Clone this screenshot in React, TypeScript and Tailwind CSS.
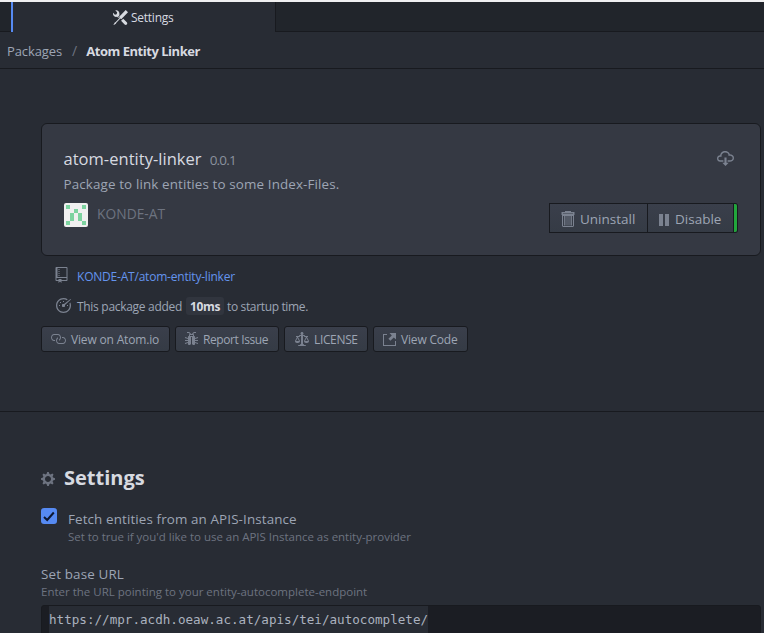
import type { ReactNode } from 'react';

function Icon({ d, w = 16, width, height, className = '' }: { d: string; w?: number; width: number; height: number; className?: string }) {
  return (
    <svg viewBox={`0 0 ${w} 16`} width={width} height={height} fill="currentColor" fillRule="evenodd" className={`shrink-0 ${className}`}>
      <path d={d} />
    </svg>
  );
}

const paths = {
  tools:
    'M4.48 7.27c.26.26 1.28 1.33 1.28 1.33l.56-.58-.88-.91 1.69-1.8s-.76-.74-.43-.45c.32-1.19.03-2.51-.87-3.44C4.93.5 3.66.2 2.52.51l1.93 2-.51 1.96-1.89.52-1.93-1.99C-.19 4.17.1 5.48 1 6.4c.94.98 2.29 1.26 3.48.87zm6.44 1.94l-2.33 2.3 3.84 3.98c.31.33.73.49 1.14.49.41 0 .82-.16 1.14-.49.63-.65.63-1.7 0-2.35l-3.79-3.93zM16 2.53L13.55 0 6.33 7.46l.88.91-4.31 4.46-.99.53-1.39 2.27.35.37 2.2-1.44.51-1.02L7.9 9.08l.88.91L16 2.53z',
  cloud:
    'M9 12h2l-3 3-3-3h2V7h2v5zm3-8c0-.44-.91-3-4.5-3C5.08 1 3 2.92 3 5 1.02 5 0 6.52 0 8c0 1.53 1 3 3 3h3V9.7H3C1.38 9.7 1.3 8.28 1.3 8c0-.17.05-1.7 1.7-1.7h1.3V5c0-1.39 1.56-2.7 3.2-2.7 2.55 0 3.13 1.55 3.2 1.8v1.2H12c.81 0 2.7.22 2.7 2.2 0 2.09-2.25 2.2-2.7 2.2h-2V11h2c2.08 0 4-1.16 4-3.5C16 5.06 14.08 4 12 4z',
  repo:
    'M4 9H3V8h1v1zm0-3H3v1h1V6zm0-2H3v1h1V4zm0-2H3v1h1V2zm8-1v12c0 .55-.45 1-1 1H6v2l-1.5-1.5L3 16v-2H1c-.55 0-1-.45-1-1V1c0-.55.45-1 1-1h10c.55 0 1 .45 1 1zm-1 10H1v2h2v-1h3v1h5v-2zm0-10H2v9h9V1z',
  dashboard:
    'M9 5H8V4h1v1zm4 3h-1v1h1V8zM6 5H5v1h1V5zM5 8H4v1h1V8zm11-5.5l-.5-.5L9 7c-.06-.02-1 0-1 0-.55 0-1 .45-1 1v1c0 .55.45 1 1 1h1c.55 0 1-.45 1-1v-.92l6-5.58zm-1.59 4.09c.19.61.3 1.25.3 1.91 0 3.42-2.78 6.2-6.2 6.2-3.42 0-6.21-2.78-6.21-6.2 0-3.42 2.78-6.2 6.2-6.2 1.2 0 2.31.34 3.27.94l.94-.94A7.459 7.459 0 0 0 8.51 1C4.36 1 1 4.36 1 8.5 1 12.64 4.36 16 8.5 16c4.14 0 7.5-3.36 7.5-7.5 0-1.03-.2-2.02-.59-2.91l-1 1z',
  link:
    'M4 9h1v1H4c-1.5 0-3-1.69-3-3.5S2.55 3 4 3h4c1.45 0 3 1.69 3 3.5 0 1.41-.91 2.72-2 3.25V8.59c.58-.45 1-1.27 1-2.09C10 5.22 8.98 4 8 4H4c-.98 0-2 1.22-2 2.5S3 9 4 9zm9-3h-1v1h1c1 0 2 1.22 2 2.5S13.98 12 13 12H9c-.98 0-2-1.22-2-2.5 0-.83.42-1.64 1-2.09V6.25c-1.09.53-2 1.84-2 3.25C6 11.31 7.55 13 9 13h4c1.45 0 3-1.69 3-3.5S14.5 6 13 6z',
  bug:
    'M11 10h3V9h-3V8l3.17-1.03-.34-.94L11 7V6c0-.55-.45-1-1-1V4c0-.48-.36-.88-.83-.97L10.2 2H12V1H9.8l-2 2h-.59L5.2 1H3v1h1.8l1.03 1.03C5.36 3.12 5 3.51 5 4v1c-.55 0-1 .45-1 1v1l-2.83-.97-.34.94L4 8v1H1v1h3v1L.83 12.03l.34.94L4 12v1c0 .55.45 1 1 1h1l1-1V6h1v7l1 1h1c.55 0 1-.45 1-1v-1l2.83.97.34-.94L11 11v-1zM9 5H6V4h3v1z',
  law:
    'M7 4c-.83 0-1.5-.67-1.5-1.5S6.17 1 7 1s1.5.67 1.5 1.5S7.83 4 7 4zm7 6c0 1.11-.89 2-2 2h-1c-1.11 0-2-.89-2-2l2-4h-1c-.55 0-1-.45-1-1H8v8c.42 0 1 .45 1 1h1c.42 0 1 .45 1 1H3c0-.55.58-1 1-1h1c0-.55.58-1 1-1h.03L6 5H5c0 .55-.45 1-1 1H3l2 4c0 1.11-.89 2-2 2H2c-1.11 0-2-.89-2-2l2-4H1V5h3c0-.55.45-1 1-1h4c.55 0 1 .45 1 1h3v1h-1l2 4zM2.5 7L1 10h3L2.5 7zM13 10l-1.5-3-1.5 3h3z',
  gear:
    'M14 8.77v-1.6l-1.94-.64-.45-1.09.88-1.84-1.13-1.13-1.81.91-1.09-.45-.69-1.92h-1.6l-.63 1.94-1.11.45-1.84-.88-1.13 1.13.91 1.81-.45 1.09L0 7.23v1.59l1.94.64.45 1.09-.88 1.84 1.13 1.13 1.81-.91 1.09.45.69 1.92h1.59l.63-1.94 1.11-.45 1.84.88 1.13-1.13-.92-1.81.47-1.09L14 8.75v.02zM7 11c-1.66 0-3-1.34-3-3s1.34-3 3-3 3 1.34 3 3-1.34 3-3 3z',
};

function Trash() {
  return (
    <svg width="14" height="16" viewBox="0 0 14 16" fill="currentColor" className="shrink-0">
      <path fillRule="evenodd" d="M4 0h6v1h3.5v3h-13V1H4V0zM2 2.2v.6h10v-.6H2z" />
      <path fillRule="evenodd" d="M1 4h12v11l-1 1H2l-1-1V4zm1 1v10h10V5H2z" />
      <path d="M3 5h1.5v9.5H3zM5.5 5h1v9.5h-1zM7.5 5h1v9.5h-1zM9.5 5H11v9.5H9.5z" opacity=".85" />
    </svg>
  );
}

function External() {
  return (
    <svg width="13" height="13" viewBox="0 0 13 13" fill="currentColor" className="shrink-0">
      <path d="M0 1h4v1H1v10h11V8h1v5H0V1z" />
      <path d="M6.5 0H13v6.5L10.8 4.4 7.4 7.8 5.4 5.8 8.8 2.4z" />
    </svg>
  );
}

const avatar = ['10001', '00100', '01010', '01010', '10001'];

function Avatar() {
  return (
    <svg width="24" height="24" viewBox="0 0 24 24" className="shrink-0 rounded-[2px]">
      <rect width="24" height="24" fill="#f0f0f0" />
      {avatar.map((row, y) =>
        [...row].map((c, x) => c === '1' && <rect key={`${x}-${y}`} x={2 + x * 4} y={2 + y * 4} width="4" height="4" fill="#7dd3a0" />),
      )}
    </svg>
  );
}

function SmallButton({ width, className = '', children }: { width: string; className?: string; children: ReactNode }) {
  return (
    <button
      className={`flex h-[26px] shrink-0 items-center rounded-[3px] border border-[#181a1f] bg-linear-to-b from-[#3a3f4b] to-[#353b45] text-[12px] leading-[20px] whitespace-nowrap text-[#9da5b4] ${width} ${className}`}
    >
      {children}
    </button>
  );
}

export default function App() {
  return (
    <div className="h-[633px] w-[764px] overflow-hidden bg-[#282c34] font-['Open_Sans','Noto_Sans',sans-serif] whitespace-nowrap text-[#9da5b4]">
      <div className="h-[2px] bg-[#f0f0f1]" />
      <div className="flex h-[30px]">
        <div className="w-[11px] border-b border-[#181a1f] bg-[#21252b]" />
        <div className="flex w-[265px] items-center border-r border-l-2 border-r-[#181a1f] border-l-[#568af2] bg-[#282c34] pt-[1px] pl-[100px] text-[12px] leading-[20px] text-[#d7dae0]">
          <Icon d={paths.tools} width={15} height={15} />
          <span className="ml-[3px] pt-[1px] tracking-[-0.25px]">Settings</span>
        </div>
        <div className="flex-1 border-b border-[#181a1f] bg-[#21252b]" />
      </div>

      <nav className="flex h-[37px] items-center border-b border-[#181a1f] pt-[2px] pl-[7px] text-[13px] leading-[20px]">
        <span className="tracking-[-0.1px]">Packages</span>
        <span className="ml-[10px] text-[14px] text-[#6d7380]">/</span>
        <span className="ml-[9px] font-bold tracking-[-0.47px] text-[#d7dae0]">Atom Entity Linker</span>
      </nav>

      <section className="h-[343px] border-b border-[#181a1f] pt-[54px] pl-[41px]">
        <div className="flex h-[133px] w-[720px] rounded-[6px] border border-[#181a1f] bg-[#353943] pl-[22px]">
          <div className="flex-1">
            <div className="mt-[25px] flex h-[20px] items-baseline leading-[20px]">
              <span className="-ml-[0.5px] text-[16.5px] tracking-[0.03px] text-[#d7dae0]">atom-entity-linker</span>
              <span className="ml-[8px] text-[13.5px] tracking-[-0.8px] text-[#8a919e]">0.0.1</span>
            </div>
            <div className="mt-[5px] -ml-[0.5px] text-[13.4px] leading-[20px] tracking-[0.13px]">Package to link entities to some Index-Files.</div>
            <div className="mt-[9px] flex h-[24px]">
              <Avatar />
              <span className="ml-[9px] text-[13.8px] leading-[22px] tracking-[0.02px] text-[#6d7380]">KONDE-AT</span>
            </div>
          </div>
          <div className="mr-[22px] flex flex-col items-end">
            <Icon d={paths.cloud} width={17} height={17} className="mt-[26px] mr-[4px] text-[#7b8290]" />
            <div className="mt-[36px] flex h-[30px] text-[13.5px] leading-[20px]">
              <button className="flex w-[99px] items-center border border-[#181a1f] bg-linear-to-b from-[#3a3f4b] to-[#353b45] pl-[11px]">
                <span className="pt-[2px] text-[#7b8290]">
                  <Trash />
                </span>
                <span className="ml-[5px] pt-[2px]">Uninstall</span>
              </button>
              <button className="flex w-[90px] items-center rounded-r-[3px] border border-l-0 border-[#181a1f] bg-linear-to-b from-[#3a3f4b] to-[#353b45] pl-[11px]">
                <span className="flex gap-[2px] pt-[3px]">
                  <i className="h-[12px] w-[4px] bg-[#7b8290]" />
                  <i className="h-[12px] w-[4px] bg-[#7b8290]" />
                </span>
                <span className="ml-[6px] pt-[2px]">Disable</span>
                <i className="ml-auto h-[28px] w-[4px] shrink-0 rounded-r-[2px] border-l border-[#181a1f] bg-[#22a63c]" />
              </button>
            </div>
          </div>
        </div>

        <div className="mt-[11px] flex h-[20px] items-start pl-[14px] text-[12px] leading-[20px]">
          <Icon d={paths.repo} w={12} width={13} height={16} className="text-[#7b8290]" />
          <a className="ml-[9px] tracking-[-0.21px] text-[#6494ed]">KONDE-AT/atom-entity-linker</a>
        </div>
        <div className="mt-[10px] flex h-[20px] items-start pl-[14px] text-[12px] leading-[20px]">
          <Icon d={paths.dashboard} width={16} height={16} className="text-[#7b8290]" />
          <span className="ml-[6px] tracking-[-0.3px]">This package added</span>
          <span className="ml-[4px] h-[18px] w-[38px] rounded-[3px] bg-[#31353e] pl-[4px] font-bold tracking-[-0.35px] text-[#d7dae0]">10ms</span>
          <span className="ml-[3px] tracking-[-0.35px]">to startup time.</span>
        </div>
        <div className="mt-[9px] flex gap-[5px]">
          <SmallButton width="w-[129px]" className="pl-[8px] tracking-[-0.17px]">
            <Icon d={paths.link} width={16} height={16} className="text-[#7b8290]" />
            <span className="ml-[5px] pt-[2px]">View on Atom.io</span>
          </SmallButton>
          <SmallButton width="w-[104px]" className="pl-[8px] tracking-[-0.4px]">
            <Icon d={paths.bug} w={15} width={15} height={16} className="text-[#7b8290]" />
            <span className="ml-[4px] pt-[2px]">Report Issue</span>
          </SmallButton>
          <SmallButton width="w-[84px]" className="pl-[10px] tracking-[-0.35px]">
            <Icon d={paths.law} w={14} width={14} height={16} className="text-[#7b8290]" />
            <span className="ml-[5px] pt-[2px]">LICENSE</span>
          </SmallButton>
          <SmallButton width="w-[95px]" className="pl-[9px] tracking-[-0.18px]">
            <span className="text-[#7b8290]">
              <External />
            </span>
            <span className="ml-[5px] pt-[2px]">View Code</span>
          </SmallButton>
        </div>
      </section>

      <section className="pt-[52px] pl-[41px]">
        <h2 className="flex h-[28px] items-center text-[20px] leading-[28px] font-bold text-[#d7dae0]">
          <Icon d={paths.gear} w={14} width={14} height={16} className="mt-[2px] text-[#6d7380]" />
          <span className="ml-[9px]">Settings</span>
        </h2>
        <div className="mt-[16px] flex">
          <span className="flex h-[16px] w-[16px] items-center justify-center rounded-[3px] bg-[#568af2]">
            <svg width="12" height="11" viewBox="0 0 12 11" fill="none" stroke="#0d1730" strokeWidth="2">
              <path d="M1 6l3.2 3L10.8 1.5" />
            </svg>
          </span>
          <div className="ml-[11px]">
            <div className="mt-[1px] text-[13.4px] leading-[20px] tracking-[0.12px]">Fetch entities from an APIS-Instance</div>
            <div className="-mt-[2px] text-[11.5px] leading-[20px] tracking-[-0.02px] text-[#6d7380]">Set to true if you&apos;d like to use an APIS Instance as entity-provider</div>
          </div>
        </div>
        <div className="mt-[17px] text-[13.4px] leading-[20px] tracking-[0.15px]">Set base URL</div>
        <div className="-mt-[2px] text-[11.5px] leading-[20px] text-[#6d7380]">Enter the URL pointing to your entity-autocomplete-endpoint</div>
        <div className="mt-[3px] h-[40px] w-[720px] rounded-[3px] border border-[#181a1f] bg-[#1b1d23] pl-[7px]">
          <span className="block h-[38px] w-[379px] bg-[#282c34] font-['DejaVu_Sans_Mono',monospace] text-[12.6px] leading-[28px] text-[#abb2bf]">
            https://mpr.acdh.oeaw.ac.at/apis/tei/autocomplete/
          </span>
        </div>
      </section>
    </div>
  );
}
